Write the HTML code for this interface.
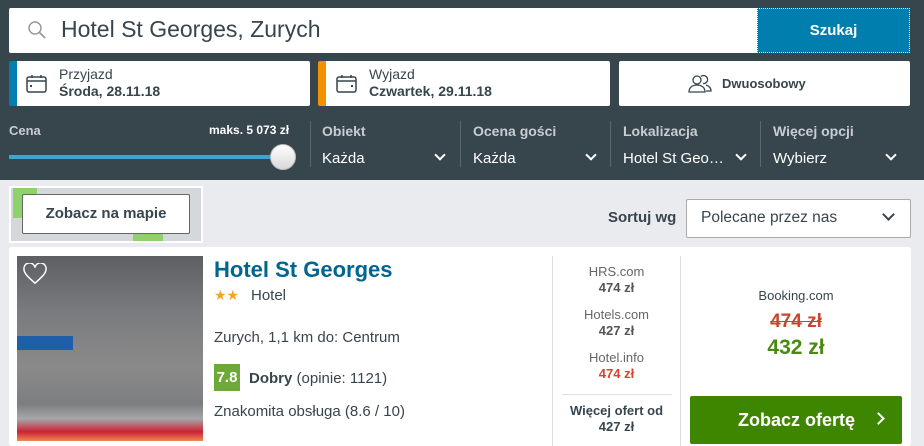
<!DOCTYPE html>
<html><head><meta charset="utf-8"><style>
*{box-sizing:border-box;margin:0;padding:0}
body{width:924px;height:446px;overflow:hidden;font-family:"Liberation Sans",sans-serif;background:#e9ebee;position:relative;color:#37454d}
.a{position:absolute}
.top{left:0;top:0;width:924px;height:180px;background:#37454d}
.w{background:#fff;border-radius:2px}
.lbl{color:#c8cdd0;font-weight:bold;font-size:14px}
.val{color:#fff;font-size:15px}
.dv{width:1px;background:#5a676e;top:121px;height:46px}
.chev{width:8px;height:8px;border-right:2px solid #fff;border-bottom:2px solid #fff;transform:rotate(45deg)}
</style></head><body>
<div class="a top"></div>
<div class="a w" style="left:9px;top:8px;width:750px;height:45px"></div>
<svg class="a" style="left:27px;top:20px" width="20" height="20" viewBox="0 0 20 20"><circle cx="8" cy="8" r="6" fill="none" stroke="#999" stroke-width="1.5"/><path d="M12.5 12.5L18 18" stroke="#999" stroke-width="1.8"/></svg>
<div class="a" style="left:61px;top:16px;font-size:23px;color:#37454d">Hotel St Georges, Zurych</div>
<div class="a" style="left:757px;top:8px;width:153px;height:45px;background:#007faf;border:1px dotted #fff;color:#fff;font-weight:bold;font-size:15px;text-align:center;line-height:43px">Szukaj</div>

<div class="a w" style="left:9px;top:61px;width:301px;height:45px;border-left:8px solid #007faf"></div>
<svg class="a" style="left:26px;top:74px" width="22" height="20" viewBox="0 0 22 20"><rect x="1" y="3" width="19" height="15" rx="2" fill="none" stroke="#37454d" stroke-width="1.5"/><path d="M1 7h19M6 1v3M15 1v3" stroke="#37454d" stroke-width="1.5"/><rect x="4" y="11" width="2" height="2" fill="#37454d"/></svg>
<div class="a" style="left:59px;top:66px;font-size:14px">Przyjazd</div>
<div class="a" style="left:59px;top:83px;font-size:14px;font-weight:bold">Środa, 28.11.18</div>
<div class="a w" style="left:318px;top:61px;width:292px;height:45px;border-left:8px solid #f39200"></div>
<svg class="a" style="left:336px;top:74px" width="22" height="20" viewBox="0 0 22 20"><rect x="1" y="3" width="19" height="15" rx="2" fill="none" stroke="#37454d" stroke-width="1.5"/><path d="M1 7h19M6 1v3M15 1v3" stroke="#37454d" stroke-width="1.5"/><rect x="15" y="11" width="2" height="2" fill="#37454d"/></svg>
<div class="a" style="left:369px;top:66px;font-size:14px">Wyjazd</div>
<div class="a" style="left:369px;top:83px;font-size:14px;font-weight:bold">Czwartek, 29.11.18</div>
<div class="a w" style="left:619px;top:61px;width:291px;height:45px"></div>
<svg class="a" style="left:688px;top:74px" width="24" height="20" viewBox="0 0 24 20"><circle cx="9" cy="6" r="4" fill="none" stroke="#37454d" stroke-width="1.3"/><path d="M1 18c0-5 4-7 8-7s8 2 8 7z" fill="none" stroke="#37454d" stroke-width="1.3"/><path d="M13 2.5a4 4 0 1 1 2 7M18 11c3 1 5 3 5 6h-5" fill="none" stroke="#37454d" stroke-width="1.3"/></svg>
<div class="a" style="left:722px;top:76px;font-size:13px;font-weight:bold">Dwuosobowy</div>

<div class="a lbl" style="left:9px;top:123px;font-size:13px">Cena</div>
<div class="a" style="left:209px;top:123px;font-size:12px;color:#fff;font-weight:bold">maks. 5 073 zł</div>
<div class="a" style="left:9px;top:155px;width:274px;height:4px;background:#3fa5d0"></div>
<div class="a" style="left:270px;top:144px;width:26px;height:26px;border-radius:50%;background:linear-gradient(#fff,#d8d8d8);border:1px solid #bbb"></div>
<div class="a dv" style="left:310px"></div><div class="a dv" style="left:460px"></div><div class="a dv" style="left:610px"></div><div class="a dv" style="left:760px"></div>
<div class="a lbl" style="left:322px;top:123px">Obiekt</div><div class="a val" style="left:322px;top:150px">Każda</div><div class="a chev" style="left:436px;top:151px"></div>
<div class="a lbl" style="left:473px;top:123px">Ocena gości</div><div class="a val" style="left:473px;top:150px">Każda</div><div class="a chev" style="left:587px;top:151px"></div>
<div class="a lbl" style="left:623px;top:123px">Lokalizacja</div><div class="a val" style="left:623px;top:150px">Hotel St Geo…</div><div class="a chev" style="left:737px;top:151px"></div>
<div class="a lbl" style="left:773px;top:123px">Więcej opcji</div><div class="a val" style="left:773px;top:150px">Wybierz</div><div class="a chev" style="left:887px;top:151px"></div>

<div class="a" style="left:9px;top:186px;width:194px;height:57px;background:#d5d8db;border:2px solid #fff;overflow:hidden">
<div class="a" style="left:2px;top:0;width:24px;height:30px;background:#8fd16a;border-radius:0 0 10px 0"></div>
<div class="a" style="left:122px;top:40px;width:30px;height:20px;background:#8fd16a;border-radius:8px 8px 0 0"></div></div>
<div class="a" style="left:22px;top:194px;width:168px;height:40px;background:#fff;border:1px solid #666;border-radius:2px;font-weight:bold;font-size:15px;text-align:center;line-height:38px">Zobacz na mapie</div>
<div class="a" style="left:608px;top:209px;font-weight:bold;font-size:15px">Sortuj wg</div>
<div class="a" style="left:686px;top:199px;width:225px;height:39px;background:#fff;border:1px solid #aaa;border-radius:2px"></div>
<div class="a" style="left:701px;top:209px;font-size:15.5px">Polecane przez nas</div>
<div class="a" style="left:884px;top:210px;width:9px;height:9px;border-right:2px solid #37454d;border-bottom:2px solid #37454d;transform:rotate(45deg)"></div>

<div class="a" style="left:9px;top:247px;width:902px;height:199px;background:#fff;border-radius:3px"></div>
<div class="a" style="left:17px;top:256px;width:186px;height:185px;background:linear-gradient(180deg,#5d5f63 0%,#7a7b7e 30%,#8a8a8a 60%,#7d7e80 80%,#a5a7aa 88%,#c23 95%,#e85 100%)"></div>
<div class="a" style="left:17px;top:336px;width:56px;height:14px;background:#1f5fa8"></div>
<svg class="a" style="left:23px;top:263px" width="24" height="22" viewBox="0 0 26 24"><path d="M13 22C5 15 1 11 1 7a5.5 5.5 0 0 1 12-2 5.5 5.5 0 0 1 12 2c0 4-4 8-12 15z" fill="none" stroke="#fff" stroke-width="1.6"/></svg>
<div class="a" style="left:214px;top:257px;font-size:22px;font-weight:bold;color:#00668f">Hotel St Georges</div>
<div class="a" style="left:214px;top:287px;font-size:14px;color:#f5a623">★★</div>
<div class="a" style="left:251px;top:287px;font-size:15px">Hotel</div>
<div class="a" style="left:214px;top:329px;font-size:15px">Zurych, 1,1 km do: Centrum</div>
<div class="a" style="left:214px;top:364px;width:26px;height:27px;background:#6ca83a;color:#fff;font-weight:bold;font-size:15px;text-align:center;line-height:27px">7.8</div>
<div class="a" style="left:249px;top:370px;font-size:15px"><b>Dobry</b> (opinie: 1121)</div>
<div class="a" style="left:214px;top:403px;font-size:15px">Znakomita obsługa (8.6 / 10)</div>

<div class="a" style="left:552px;top:256px;width:1px;height:190px;background:#ddd"></div>
<div class="a" style="left:680px;top:256px;width:1px;height:190px;background:#ddd"></div>
<div class="a" style="left:562px;top:394px;width:110px;height:1px;background:#ddd"></div>
<div class="a" style="left:553px;top:264px;width:127px;text-align:center;font-size:13px;line-height:16px;color:#666">HRS.com<br><b style="color:#555">474 zł</b></div>
<div class="a" style="left:553px;top:307px;width:127px;text-align:center;font-size:13px;line-height:16px;color:#666">Hotels.com<br><b style="color:#555">427 zł</b></div>
<div class="a" style="left:553px;top:350px;width:127px;text-align:center;font-size:13px;line-height:16px;color:#666">Hotel.info<br><b style="color:#d9432b">474 zł</b></div>
<div class="a" style="left:553px;top:403px;width:127px;text-align:center;font-size:13px;line-height:16px;font-weight:bold;color:#37454d">Więcej ofert od<br>427 zł</div>
<div class="a" style="left:690px;top:288px;width:212px;text-align:center;font-size:13px">Booking.com</div>
<div class="a" style="left:690px;top:311px;width:212px;text-align:center;font-size:19px;font-weight:bold;color:#c9452d"><span style="text-decoration:line-through">474 zł</span></div>
<div class="a" style="left:690px;top:336px;width:212px;text-align:center;font-size:21px;font-weight:bold;color:#4a8a12">432 zł</div>
<div class="a" style="left:690px;top:396px;width:212px;height:48px;background:#3f8600;border-radius:2px;color:#fff;font-weight:bold;font-size:18px;line-height:48px;padding-left:48px">Zobacz ofertę</div>
<div class="a" style="left:874px;top:414px;width:9px;height:9px;border-right:2.5px solid #fff;border-top:2.5px solid #fff;transform:rotate(45deg)"></div>
</body></html>
